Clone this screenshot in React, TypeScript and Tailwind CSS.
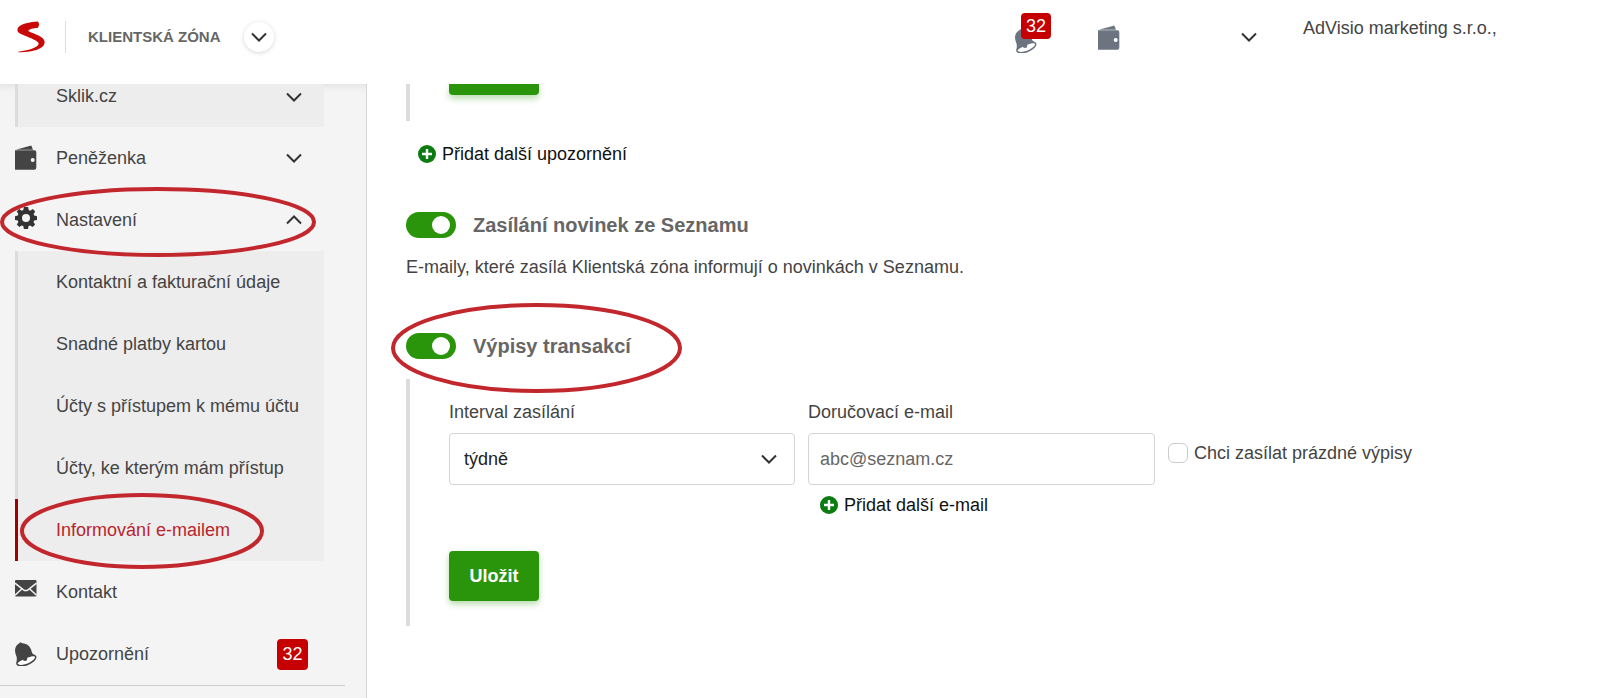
import { useState } from "react";
import type { ReactNode } from "react";

function Chevron({ up = false, className = "" }: { up?: boolean; className?: string }) {
  return (
    <svg
      viewBox="0 0 16 10"
      className={`h-[10px] w-4 shrink-0 ${up ? "rotate-180" : ""} ${className}`}
      fill="none"
      stroke="#333"
      strokeWidth="2"
      aria-hidden="true"
    >
      <path d="M1 1.5 8 8.500 15 1.500" />
    </svg>
  );
}

function Logo() {
  return (
    <svg viewBox="0 0 28 32" className="h-8 w-7" fill="#c90808" aria-hidden="true">
      <path d="M20.800.4C13 .8 4 3 1.500 6C-.6 9 .5 11.300 3.500 12.800C10 16 19.500 18.800 21.500 22C23 26 12 29.300 0 31C9 32 22.500 29.500 26.300 25C29.300 20.500 27 17.300 21.500 14.500C17 12.300 12 11.200 11.300 9.800C11.500 8.200 18 6.800 20.500 7C22.500 5 22.500 2 20.800.4Z" />
    </svg>
  );
}

function WalletIcon() {
  return (
    <svg viewBox="0 0 22 26" className="h-[26px] w-[22px] shrink-0" fill="currentColor" aria-hidden="true">
      <path d="M.8 4.700 16.300.6 18 4.700Z" />
      <path
        fillRule="evenodd"
        d="M0 5.300H19.500A1.800 1.800 0 0 1 21.300 7V22.800A2 2 0 0 1 19.300 24.800H0ZM17.700 13a2 2 0 1 0 0 4a2 2 0 1 0 0-4Z"
      />
    </svg>
  );
}

function GearIcon() {
  return (
    <svg viewBox="0 0 22 22" className="mb-1 h-[22px] w-[22px] shrink-0" fill="#333" aria-hidden="true">
      <path
        fillRule="evenodd"
        d="M8.900 0h4.200l.6 3 1.500.7L17.800 2l2.400 2.600-1.600 2.500.6 1.500 2.800.6v3.700l-2.900.6-.6 1.500 1.600 2.500-2.500 2.500-2.500-1.600-1.500.6-.6 3H8.900l-.6-3-1.500-.6L4.300 20l-2.500-2.500L3.400 15l-.6-1.500L0 12.900V9.200l2.800-.6.6-1.500L1.800 4.600 4.200 2l2.600 1.700L8.300 3ZM11 7a4 4 0 1 0 0 8a4 4 0 1 0 0-8Z"
      />
    </svg>
  );
}

function MailIcon() {
  return (
    <svg viewBox="0 0 22 17" className="mb-2 h-[17px] w-[22px] shrink-0" aria-hidden="true">
      <rect width="21.500" height="16.500" rx="1" fill="currentColor" />
      <path
        d="M0 3.200 8.500 9.800Q10.700 11.300 13 9.800L21.500 3.200M0 15.300 7 8.700M21.500 15.300 14.500 8.700"
        fill="none"
        stroke="#f4f4f4"
        strokeWidth="1.500"
      />
    </svg>
  );
}

function BellIcon() {
  return (
    <svg viewBox="0 0 22 24" className="h-6 w-[22px] shrink-0" fill="currentColor" aria-hidden="true">
      <ellipse
        cx="11.300"
        cy="18.300"
        rx="10"
        ry="4.200"
        transform="rotate(-22 11.300 18.300)"
        fill="#fff"
        stroke="currentColor"
        strokeWidth="1.500"
      />
      <path d="M4 1.500 5.300.3 7.300 1.300C12 1.500 15.500 4.500 16.500 9C17 11.500 18.500 12.700 20.300 14C15 14.300 8.500 16.500 2.300 21.300C.8 20 2.500 17.500 1.500 14.500C.5 11.500-.5 9 .4 6C1 3.800 2.500 2.500 4 1.500Z" />
      <circle cx="10" cy="16.800" r="2.300" />
    </svg>
  );
}

function PlusIcon() {
  return (
    <svg viewBox="0 0 18 18" className="h-[18px] w-[18px] shrink-0" aria-hidden="true">
      <circle cx="9" cy="9" r="9" fill="#0b7d10" />
      <path d="M9 4v10M4 9h10" stroke="#fff" strokeWidth="2.400" />
    </svg>
  );
}

// hand-drawn style highlight around an item
function Ring({ width, height, className }: { width: number; height: number; className: string }) {
  return (
    <svg
      width={width}
      height={height}
      className={`pointer-events-none absolute max-w-none ${className}`}
      fill="none"
      stroke="#c1272d"
      strokeWidth="4"
      aria-hidden="true"
    >
      <ellipse cx={width / 2} cy={height / 2} rx={width / 2 - 2} ry={height / 2 - 2} />
    </svg>
  );
}

function Badge({ children, className = "" }: { children: ReactNode; className?: string }) {
  return (
    <span
      className={`flex items-center justify-center rounded bg-[#c60000] text-lg leading-none text-white ${className}`}
    >
      {children}
    </span>
  );
}

function MenuItem({ icon, label, children }: { icon: ReactNode; label: string; children?: ReactNode }) {
  return (
    <a href="#" className="flex h-[62px] items-center pr-[22px]">
      <span className="flex w-[41px]">{icon}</span>
      <span className="flex-1">{label}</span>
      {children}
    </a>
  );
}

const settings = [
  "Kontaktní a fakturační údaje",
  "Snadné platby kartou",
  "Účty s přístupem k mému účtu",
  "Účty, ke kterým mám přístup",
];

function Sidebar() {
  return (
    <aside className="w-[367px] shrink-0 border-r border-[#d8d8d8] bg-[#f4f4f4] shadow-[inset_0_8px_8px_-6px_rgba(0,0,0,0.08)]">
      <nav className="ml-[15px] mr-[42px] text-[#444]">
        <a
          href="#"
          className="flex h-[43px] items-start border-l-[3px] border-[#dcdcdc] bg-[#ededed] pl-[38px] pr-[22px]"
        >
          <span className="flex-1 leading-6">Sklik.cz</span>
          <Chevron className="mt-2" />
        </a>
        <MenuItem icon={<WalletIcon />} label="Peněženka">
          <Chevron />
        </MenuItem>
        <div className="relative">
          <MenuItem icon={<GearIcon />} label="Nastavení">
            <Chevron up />
          </MenuItem>
          <Ring width={316} height={70} className="-left-[15px] -top-[2px]" />
        </div>
        <ul className="bg-[#ededed]">
          {settings.map((item) => (
            <li key={item}>
              <a href="#" className="flex h-[62px] items-center border-l-[3px] border-[#dcdcdc] pl-[38px]">
                {item}
              </a>
            </li>
          ))}
          <li className="relative">
            <a
              href="#"
              aria-current="page"
              className="flex h-[62px] items-center border-l-[3px] border-[#a00000] pl-[38px] text-[#b8252d]"
            >
              Informování e-mailem
            </a>
            <Ring width={244} height={76} className="left-[5px] -top-[6px]" />
          </li>
        </ul>
        <MenuItem icon={<MailIcon />} label="Kontakt" />
        <MenuItem icon={<BellIcon />} label="Upozornění">
          <Badge className="-mr-[6px] h-[31px] w-[31px]">32</Badge>
        </MenuItem>
      </nav>
      <hr className="mr-[21px] border-[#ccc]" />
    </aside>
  );
}

function Header() {
  return (
    <header className="flex h-[84px] items-start bg-white">
      <div className="flex h-[74px] flex-1 items-center pl-[17px]">
        <a href="#" aria-label="Seznam">
          <Logo />
        </a>
        <span className="ml-5 h-8 w-px bg-[#ddd]" />
        <span className="ml-[22px] text-[15px] font-bold text-[#666]">KLIENTSKÁ ZÓNA</span>
        <button
          aria-label="Otevřít nabídku"
          className="ml-[23px] flex h-[30px] w-[30px] items-center justify-center rounded-full bg-white shadow-[0_1px_5px_rgba(0,0,0,0.16)]"
        >
          <Chevron />
        </button>
      </div>
      <div className="flex h-[74px] items-center text-[#6b7480]">
        <button aria-label="Upozornění" className="relative mt-2">
          <BellIcon />
          <Badge className="absolute -top-4 left-[6px] h-[26px] w-[30px]">32</Badge>
        </button>
        <button aria-label="Peněženka" className="ml-[61px] mt-[2px]">
          <WalletIcon />
        </button>
        <button aria-label="Účet" className="ml-[121px]">
          <Chevron />
        </button>
      </div>
      <div className="ml-[46px] w-[297px] pt-4 leading-6 text-[#444]">AdVisio marketing s.r.o.,</div>
    </header>
  );
}

function Toggle({ id, label }: { id: string; label: string }) {
  const [on, setOn] = useState(true);
  return (
    <label htmlFor={id} className="flex h-[26px] w-fit items-center gap-[17px] text-xl font-bold text-[#666]">
      <input
        id={id}
        type="checkbox"
        role="switch"
        checked={on}
        onChange={() => setOn(!on)}
        className="h-[26px] w-[50px] appearance-none rounded-full bg-[#ccc] p-1 before:block before:h-[18px] before:w-[18px] before:rounded-full before:bg-white checked:bg-[#2a940b] checked:before:ml-[22px]"
      />
      {label}
    </label>
  );
}

function AddLink({ children }: { children: ReactNode }) {
  return (
    <button className="ml-3 flex items-center gap-[6px] leading-6 text-[#111]">
      <PlusIcon />
      {children}
    </button>
  );
}

function StatementForm() {
  return (
    <form className="border-l-4 border-[#dcdcdc] pl-[39px]" onSubmit={(e) => e.preventDefault()}>
      <div className="flex items-start gap-[13px] pt-[21px]">
        <div className="max-w-[346px] flex-1">
          <label htmlFor="interval" className="block leading-6">
            Interval zasílání
          </label>
          <div className="relative mt-[9px]">
            <select
              id="interval"
              className="h-[52px] w-full appearance-none rounded border border-[#d5d5d5] bg-white px-[14px] text-[#222]"
            >
              <option>týdně</option>
              <option>měsíčně</option>
            </select>
            <Chevron className="pointer-events-none absolute right-[18px] top-[21px]" />
          </div>
        </div>
        <div className="max-w-[347px] flex-1">
          <label htmlFor="email" className="block leading-6">
            Doručovací e-mail
          </label>
          <input
            id="email"
            type="email"
            defaultValue="abc@seznam.cz"
            className="mb-2 mt-[9px] h-[52px] w-full rounded border border-[#d5d5d5] px-[11px] text-[#666]"
          />
          <AddLink>Přidat další e-mail</AddLink>
        </div>
        <label htmlFor="empty" className="mt-[41px] flex items-center gap-[6px] leading-6">
          <input
            id="empty"
            type="checkbox"
            className="h-5 w-5 appearance-none rounded-md border border-[#ccc] bg-white checked:bg-[#2a940b]"
          />
          Chci zasílat prázdné výpisy
        </label>
      </div>
      <div className="pb-[25px] pt-[34px]">
        <button className="block h-[50px] w-[90px] rounded bg-[#2a940b] font-bold text-white shadow-[0_3px_6px_rgba(42,148,11,0.35)]">
          Uložit
        </button>
      </div>
    </form>
  );
}

export default function App() {
  return (
    <div className="flex h-screen flex-col overflow-hidden bg-white font-['Liberation_Sans',Arial,sans-serif] text-lg text-[#444]">
      <Header />
      <div className="flex flex-1">
        <Sidebar />
        <main className="flex-1 pl-[39px] pr-6">
          <div className="h-[37px] border-l-4 border-[#dcdcdc] pl-[39px]">
            <button
              aria-label="Uložit upozornění"
              className="block h-[11px] w-[90px] rounded-b bg-[#2a940b] shadow-[0_4px_6px_rgba(42,148,11,0.3)]"
            />
          </div>
          <div className="pt-[21px]">
            <AddLink>Přidat další upozornění</AddLink>
          </div>
          <section className="mt-[46px]">
            <Toggle id="news" label="Zasílání novinek ze Seznamu" />
            <p className="mt-[17px] leading-6">E-maily, které zasílá Klientská zóna informují o novinkách v Seznamu.</p>
          </section>
          <section className="mt-[54px]">
            <div className="relative mb-5">
              <Toggle id="statements" label="Výpisy transakcí" />
              <Ring width={291} height={90} className="-left-[15px] -top-[30px]" />
            </div>
            <StatementForm />
          </section>
        </main>
      </div>
    </div>
  );
}
